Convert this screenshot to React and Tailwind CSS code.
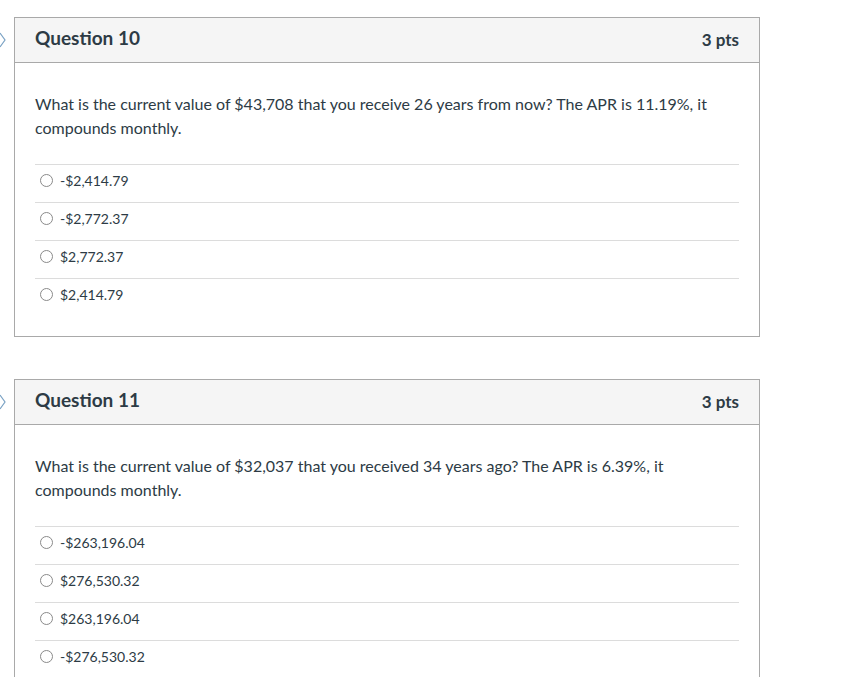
import React from 'react';

const questions = [
  {
    n: 10,
    text: 'What is the current value of $43,708 that you receive 26 years from now? The APR is 11.19%, it compounds monthly.',
    answers: ['-$2,414.79', '-$2,772.37', '$2,772.37', '$2,414.79'],
  },
  {
    n: 11,
    text: 'What is the current value of $32,037 that you received 34 years ago? The APR is 6.39%, it compounds monthly.',
    answers: ['-$263,196.04', '$276,530.32', '$263,196.04', '-$276,530.32'],
  },
];

function Question({ q }) {
  return (
    <div className="relative w-[746px] border border-[#a9a9a9] bg-white">
      {/* bookmark arrow */}
      <svg className="absolute left-[-15px] top-[14px]" width="8" height="16" viewBox="0 0 8 16">
        <polyline points="0,1 5,8 0,15" fill="none" stroke="#7aa2c4" strokeWidth="1.2" />
      </svg>
      <div className="h-[45px] flex items-center justify-between px-5 bg-[#f5f5f5] border-b border-[#a9a9a9]">
        <span className="text-[19px] font-bold text-[#2d3b45] mb-[3px]">Question {q.n}</span>
        <span className="text-[17px] font-bold text-[#2d3b45]">3 pts</span>
      </div>
      <div className="px-5 pt-[29px] pb-5">
        <p className="text-[16px] leading-6 text-[#2d3b45] pr-6">{q.text}</p>
        <div className="mt-6">
          {q.answers.map((a) => (
            <div key={a} className="h-[38px] flex items-center border-t border-[#dcdcdc] pl-[5px] pb-[6px] gap-[7px]">
              <span className="w-[13px] h-[13px] rounded-full border border-[#8a8a8a] bg-white" />
              <span className="text-[14px] text-[#2d3b45]">{a}</span>
            </div>
          ))}
        </div>
      </div>
    </div>
  );
}

export default function App() {
  return (
    <div className="min-h-screen bg-white pl-[14px] pt-[17px] font-['Lato',sans-serif]">
      <div className="flex flex-col gap-[42px]">
        {questions.map((q) => (
          <Question key={q.n} q={q} />
        ))}
      </div>
    </div>
  );
}
